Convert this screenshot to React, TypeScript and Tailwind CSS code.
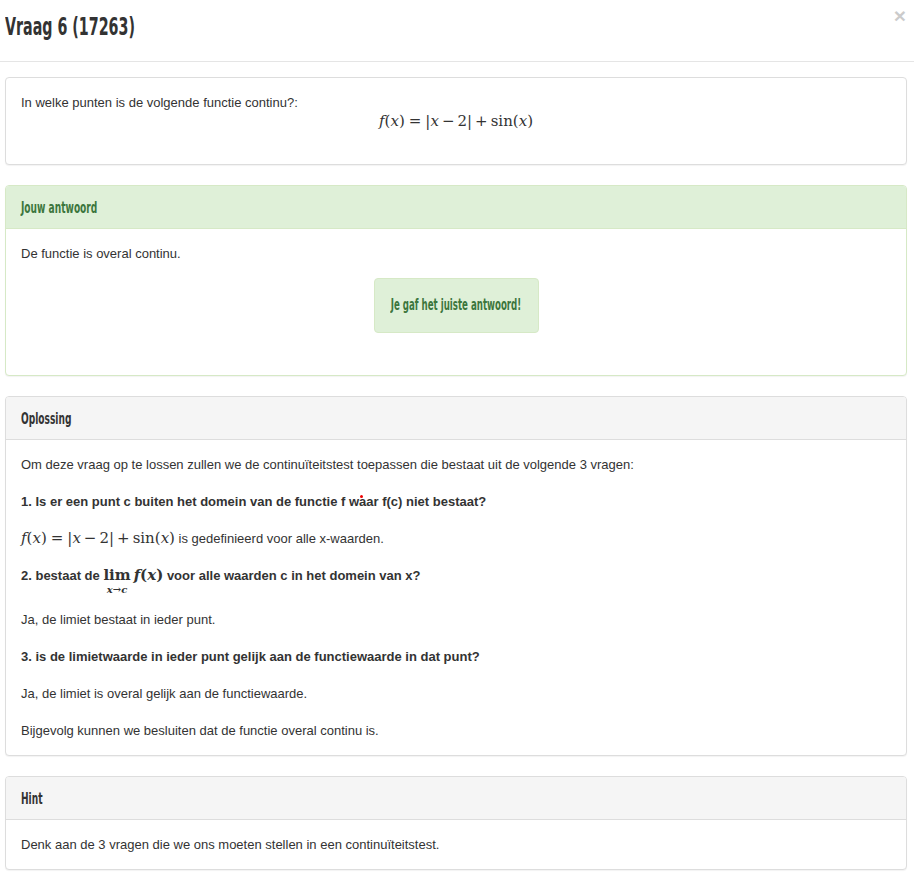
import React from 'react';

const serif = "font-['DejaVu_Serif','Liberation_Serif',serif]";
const head = "font-['DejaVu_Sans_Condensed','Liberation_Sans',sans-serif] font-bold";

const V = ({ children }: { children: React.ReactNode }) => <span className="italic">{children}</span>;

const Formula = () => (
  <span className={`${serif} text-[15px] whitespace-nowrap`}>
    <V>f</V>(<V>x</V>)<span className="mx-[4px]">=</span>|<V>x</V>
    <span className="mx-[3px]">−</span>2|<span className="mx-[3px]">+</span>sin(<V>x</V>)
  </span>
);

const Limit = () => (
  <span className={`${serif} inline-flex items-start align-top whitespace-nowrap`}>
    <span className="inline-flex flex-col items-center leading-none">
      <span className="text-[15px] font-bold leading-[19px]">lim</span>
      <span className="text-[10px] italic leading-[9px]">x→c</span>
    </span>
    <span className="text-[15px] font-bold leading-[19px] ml-[3px]">
      <V>f</V>(<V>x</V>)
    </span>
  </span>
);

const Panel = ({
  title,
  tone = 'gray',
  children,
}: {
  title: string;
  tone?: 'gray' | 'green';
  children: React.ReactNode;
}) => {
  const green = tone === 'green';
  return (
    <div
      className={`mb-[20px] rounded-[4px] border bg-white shadow-[0_1px_1px_rgba(0,0,0,0.05)] ${
        green ? 'border-[#d6e9c6]' : 'border-[#ddd]'
      }`}
    >
      <div
        className={`h-[43px] flex items-center px-[15px] border-b rounded-t-[3px] ${
          green ? 'bg-[#dff0d8] border-[#d6e9c6] text-[#3c763d]' : 'bg-[#f5f5f5] border-[#ddd] text-[#333]'
        }`}
      >
        <span className={`inline-block origin-left scale-x-[0.63] whitespace-nowrap text-[16px] ${head}`}>{title}</span>
      </div>
      <div className="p-[15px]">{children}</div>
    </div>
  );
};

export default function App() {
  return (
    <div className="w-[914px] min-h-[893px] bg-white text-[13px] leading-[19px] text-[#333] font-['Liberation_Sans',Arial,sans-serif]">
      {/* Modal header */}
      <div className="h-[62px] border-b border-[#e5e5e5] flex items-start justify-between pl-[5px] pr-[8px]">
        <h4 className={`${head} text-[24px] leading-[26px] mt-[14px] text-[#333] inline-block origin-left scale-x-[0.66] whitespace-nowrap`}>
          Vraag 6 (17263)
        </h4>
        <button className="mt-[5px] text-[21px] font-bold leading-none text-black opacity-20">×</button>
      </div>

      <div className="pl-[5px] pr-[7px] pt-[15px]">
        {/* Question */}
        <div className="mb-[20px] rounded-[4px] border border-[#ddd] bg-white shadow-[0_1px_1px_rgba(0,0,0,0.05)] px-[15px] pt-[15px] pb-[33px]">
          <p>In welke punten is de volgende functie continu?:</p>
          <div className="h-[19px] flex items-center justify-center">
            <Formula />
          </div>
        </div>

        {/* Answer */}
        <Panel title="Jouw antwoord" tone="green">
          <p className="mb-[15px]">De functie is overal continu.</p>
          <div className="flex justify-center mb-[27px]">
            <div className="w-[165px] h-[55px] flex items-center justify-center rounded-[4px] border border-[#d6e9c6] bg-[#dff0d8] text-[#3c763d]">
              <span className={`inline-block scale-x-[0.64] whitespace-nowrap text-[15px] ${head}`}>Je gaf het juiste antwoord!</span>
            </div>
          </div>
        </Panel>

        {/* Solution */}
        <Panel title="Oplossing">
          <div className="flex flex-col gap-[18px]">
            <p>Om deze vraag op te lossen zullen we de continuïteitstest toepassen die bestaat uit de volgende 3 vragen:</p>
            <p className="font-bold">
              1. Is er een punt c buiten het domein van de functie f w
              <span className="relative">
                a
                <span className="absolute left-[1px] top-[1px] w-[3px] h-[3px] rounded-full bg-[#e00]" />
              </span>
              ar f(c) niet bestaat?
            </p>
            <p>
              <Formula /> is gedefinieerd voor alle x-waarden.
            </p>
            <p className="font-bold h-[26px]">
              2. bestaat de <Limit /> voor alle waarden c in het domein van x?
            </p>
            <p>Ja, de limiet bestaat in ieder punt.</p>
            <p className="font-bold">3. is de limietwaarde in ieder punt gelijk aan de functiewaarde in dat punt?</p>
            <p>Ja, de limiet is overal gelijk aan de functiewaarde.</p>
            <p>Bijgevolg kunnen we besluiten dat de functie overal continu is.</p>
          </div>
        </Panel>

        {/* Hint */}
        <Panel title="Hint">
          <p>Denk aan de 3 vragen die we ons moeten stellen in een continuïteitstest.</p>
        </Panel>
      </div>
    </div>
  );
}
